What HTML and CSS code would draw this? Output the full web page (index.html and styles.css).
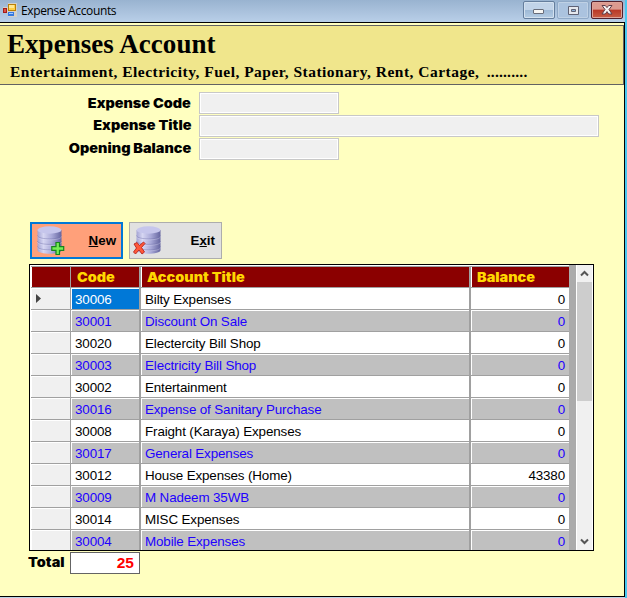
FILE: index.html
```
<!DOCTYPE html>
<html lang="en">
<head>
<meta charset="utf-8">
<title>Expense Accounts</title>
<link rel="stylesheet" href="styles.css">
</head>
<body>
<svg class="defs" width="0" height="0" aria-hidden="true">
  <defs>
    <linearGradient id="metal"><stop offset="0" stop-color="#a3a3d3"/><stop offset=".25" stop-color="#d6d6f2"/><stop offset=".6" stop-color="#a9a9d8"/><stop offset="1" stop-color="#65659f"/></linearGradient>
    <g id="database">
      <path d="M.5 4V24C.5 29 24.5 29 24.5 24V4" fill="url(#metal)"/>
      <ellipse cx="12.5" cy="4" rx="12" ry="3.7" fill="#c6c6ec"/>
      <path d="M.5 9.5C.5 14 24.5 14 24.5 9.5M.5 15C.5 19.5 24.5 19.5 24.5 15M.5 20.5C.5 25 24.5 25 24.5 20.5" fill="none" stroke="#7070aa" stroke-width=".8" opacity=".55"/>
      <path d="M.5 10.5C.5 15 24.5 15 24.5 10.5M.5 16C.5 20.5 24.5 20.5 24.5 16M.5 21.5C.5 26 24.5 26 24.5 21.5" fill="none" stroke="#e3e4f7" stroke-width=".6" opacity=".5"/>
    </g>
  </defs>
</svg>
<div class="window">
  <header class="titlebar">
    <svg class="app-icon" width="14" height="14" viewBox="0 0 14 14"><path d="M0 4H5V0H14V14H5V10H0Z" fill="#d4d0c8"/><rect x="5.5" y="1.5" width="7" height="6" fill="#ffcf45" stroke="#b98008"/><path d="M6 2h5v3H6z" fill="#ffe791"/><rect x=".5" y="5.5" width="3" height="4" fill="#db5046" stroke="#a51d18"/><rect x="5" y="9" width="6" height="4" fill="#3478e0"/><path d="M6 10h4v1H6z" fill="#a6ccff"/></svg>
    <span class="window-title">Expense Accounts</span>
    <div class="controls">
      <button class="control" aria-label="Minimize"><svg width="12" height="6" viewBox="0 0 12 6"><rect x=".5" y=".5" width="10" height="4" rx=".5" fill="#f6f6f4" stroke="#686d7a"/></svg></button>
      <button class="control dim" aria-label="Maximize"><svg width="11" height="9" viewBox="0 0 11 9"><path d="M.5.5h10v8H.5z" fill="#e5e8ee" stroke="#5f6275"/><path d="M3.5 3.5h4v2h-4z" fill="#8eb0d6" stroke="#5f6275"/></svg></button>
      <button class="control close" aria-label="Close"><svg width="12" height="10" viewBox="0 0 12 10"><path d="M1 .5H4.3L6 2.6 7.7.5H11L8 4.5 11 9H7.7L6 6.6 4.3 9H1L4 4.5Z" fill="#f6f4f4" stroke="#5e3d49"/></svg></button>
    </div>
  </header>
  <main class="client">
    <section class="banner">
      <h1>Expenses Account</h1>
      <p>Entertainment, Electricity, Fuel, Paper, Stationary, Rent, Cartage, <span class="dots">..........</span></p>
    </section>
    <form class="fields">
      <label for="code"><span class="wide">Expense Code</span></label><input id="code" class="short">
      <label for="title"><span class="wide">Expense Title</span></label><input id="title">
      <label for="opening"><span class="wide">Opening Balance</span></label><input id="opening" class="short">
    </form>
    <div class="actions">
      <button class="action new"><svg width="28" height="31" viewBox="0 0 28 31"><use href="#database" y="1"/><path d="M19 17.5h3.5v4.2h4.2v3.6h-4.2v4.2H19v-4.2h-4.2v-3.6H19z" fill="#77ed56" stroke="#17841c" stroke-width="1.2"/></svg><span><u>N</u>ew</span></button>
      <button class="action"><svg width="28" height="31" viewBox="-3 0 28 31"><use href="#database" y="1"/><path d="M-2 19L1 17.5 3.5 20.5 7.5 17 9 18.5 5.5 22.5 8.5 27 6 29 3 25-.5 29-2.5 27 .5 23Z" fill="#ff5839" stroke="#b5231e" stroke-width=".9"/></svg><span>E<u>x</u>it</span></button>
    </div>
    <div class="grid-box">
      <div class="grid">
        <div class="row head"><div></div><div><span class="wide">Code</span></div><div><span class="wide">Account Title</span></div><div><span class="wide">Balance</span></div></div>
        <div class="row current"><div><svg width="5" height="9" viewBox="0 0 5 9"><path d="M0 0L5 4.5 0 9Z" fill="#444"/></svg></div><div>30006</div><div>Bilty Expenses</div><div>0</div></div>
        <div class="row alt"><div></div><div>30001</div><div>Discount On Sale</div><div>0</div></div>
        <div class="row"><div></div><div>30020</div><div>Electercity Bill Shop</div><div>0</div></div>
        <div class="row alt"><div></div><div>30003</div><div>Electricity Bill Shop</div><div>0</div></div>
        <div class="row"><div></div><div>30002</div><div>Entertainment</div><div>0</div></div>
        <div class="row alt"><div></div><div>30016</div><div>Expense of Sanitary Purchase</div><div>0</div></div>
        <div class="row"><div></div><div>30008</div><div>Fraight (Karaya) Expenses</div><div>0</div></div>
        <div class="row alt"><div></div><div>30017</div><div>General Expenses</div><div>0</div></div>
        <div class="row"><div></div><div>30012</div><div>House Expenses (Home)</div><div>43380</div></div>
        <div class="row alt"><div></div><div>30009</div><div>M Nadeem 35WB</div><div>0</div></div>
        <div class="row"><div></div><div>30014</div><div>MISC Expenses</div><div>0</div></div>
        <div class="row alt"><div></div><div>30004</div><div>Mobile Expenses</div><div>0</div></div>
      </div>
      <div class="scrollbar"><svg width="9" height="17" viewBox="0 0 9 17"><path d="M1 10.5L4.5 7 8 10.5" fill="none" stroke="#555" stroke-width="2"/></svg><div class="thumb"></div><svg class="down" width="9" height="17" viewBox="0 0 9 17"><path d="M1 6.5L4.5 10 8 6.5" fill="none" stroke="#555" stroke-width="2"/></svg></div>
    </div>
    <div class="summary"><span class="total-label"><span class="wide">Total</span></span><output>25</output></div>
  </main>
</div>
</body>
</html>
```
FILE: styles.css
```
* { box-sizing: border-box; }
body { margin: 0; width: 627px; height: 598px; overflow: hidden; font: 14px "Liberation Sans", sans-serif; color: #000; }
.defs { display: block; }
svg { display: block; flex: none; }
.window { width: 627px; height: 598px; background: #bcd3e8; border-right: 2px solid #48c8f0; }
.titlebar { height: 22px; display: flex; align-items: flex-start; padding: 3px 2px 0 3px; background: linear-gradient(#99b3d0, #b9cfe8); }
.app-icon { margin-right: 4px; }
.window-title { font: 12px/16px "Open Sans", sans-serif; letter-spacing: -.36px; }
.controls { display: flex; gap: 2px; margin: -2px 0 0 auto; }
.control { width: 32px; height: 18px; padding: 0; display: flex; align-items: center; justify-content: center; border: 1px solid #657e9d; border-radius: 2px; box-shadow: inset 0 0 0 1px #d3e1ef; background: linear-gradient(#c1d3e8 48%, #9db8d5 50%, #b4cce4); }
.control:first-child svg { margin-top: 3px; }
.control.dim { border-color: #8fa9c7; box-shadow: inset 0 0 0 1px #bfd1e5; background: #abc3df; }
.control.close { border-color: #51202d; box-shadow: inset 0 0 0 1px #dda399; background: linear-gradient(#dc9a8f 45%, #b93827 50%, #c85e45); }
.client { width: 625px; height: 575px; border: solid #000; border-width: 1px 1px 1px 0; background: #ffffc0; padding-top: 2px; }
.banner { height: 60px; border: solid #626262; border-width: 1px 1px 1px 0; background: #f0e68c; overflow: hidden; }
h1 { margin: 3px 0 0 7px; font: bold 27px/30px "Liberation Serif", serif; letter-spacing: .05px; white-space: nowrap; }
.banner p { margin: 3px 0 0 10px; font: bold 15.5px/20px "Liberation Serif", serif; white-space: nowrap; letter-spacing: .48px; }
.dots { margin-left: 3px; letter-spacing: .2px; }
.fields { height: 137px; padding: 7px 0 0; display: grid; grid-template-columns: 191px 400px; grid-template-rows: repeat(3, 22px); column-gap: 8px; row-gap: 1px; align-content: start; }
.wide { display: inline-block; transform: scaleX(1.11); transform-origin: left; }
.fields label { font: 900 13px/22px Inter, sans-serif; text-align: right; white-space: nowrap; }
.fields label:nth-of-type(n+2) { line-height: 20px; }
.fields label .wide { transform-origin: right; }
.fields input { width: 400px; height: 22px; border: 1px solid #c8c8c8; box-shadow: inset 0 0 0 1px #fff; background: #f0f0f0; padding: 2px; }
.fields .short { width: 140px; }
.actions { display: flex; gap: 6px; margin-left: 30px; height: 37px; }
.action { width: 93px; height: 37px; border: 1px solid #adadad; background: #e1e1e1; display: flex; align-items: center; justify-content: space-between; padding: 0 6px 0 3px; font: bold 13.33px "Liberation Sans", sans-serif; color: #000; }
.action.new { border: 2px solid #0078d7; background: #ffa07a; padding: 0 5px; }
.action u { text-underline-offset: 1px; }
.grid-box { width: 565px; height: 287px; margin: 5px 0 0 29px; border: 1px solid #000; background: #ababab; display: flex; justify-content: space-between; overflow: hidden; }
.grid { width: 539px; padding-top: 1px; background: #a0a0a0; box-shadow: inset 1px 1px #fff; overflow: hidden; }
.row { height: 22px; padding-left: 1px; display: grid; grid-template-columns: 40px 70px 330px 98px; }
.row > div { border: solid #a0a0a0; border-width: 0 1px 1px 0; box-shadow: inset 1px 1px #fff; padding: 1px 0 0 4px; background: #fff; line-height: 21px; font-size: 13.4px; letter-spacing: -.13px; white-space: nowrap; overflow: hidden; height: 22px; }
.row > div:nth-child(2), .row > div:nth-child(3) { border-right-width: 2px; }
.row > div:last-child { text-align: right; border-right: 0; padding-right: 4px; }
.row > div:first-child { background: #f0f0f0; padding: 6px 0 0 5px; }
.row.alt > div:not(:first-child) { background: #c0c0c0; color: #2000ff; }
.row.current > div:nth-child(2) { background: #0078d7; color: #fff; }
.row.head > div { border-top: 1px solid #a0a0a0; background: #8b0000; color: #ffd700; font: 900 13px/21px Inter, sans-serif; letter-spacing: 0; padding: 0 0 0 6px; text-align: left; box-shadow: inset 1px 0 #fff; }
.row.head > div:nth-child(2) { box-shadow: none; }
.scrollbar { width: 17px; display: flex; flex-direction: column; align-items: center; background: #f0f0f0; border: solid #fff; border-width: 0 1px; }
.thumb { width: 15px; height: 119px; background: #cdcdcd; }
.down { margin-top: auto; }
.summary { display: flex; margin-left: 28px; height: 23px; }
.total-label { width: 42px; font: 900 13px/22px Inter, sans-serif; }
output { width: 70px; height: 22px; margin-top: 1px; border: 1px solid #646464; background: #fff; color: #f00; text-align: right; padding-right: 5px; font: bold 15.5px/20px "Liberation Sans", sans-serif; }
```
